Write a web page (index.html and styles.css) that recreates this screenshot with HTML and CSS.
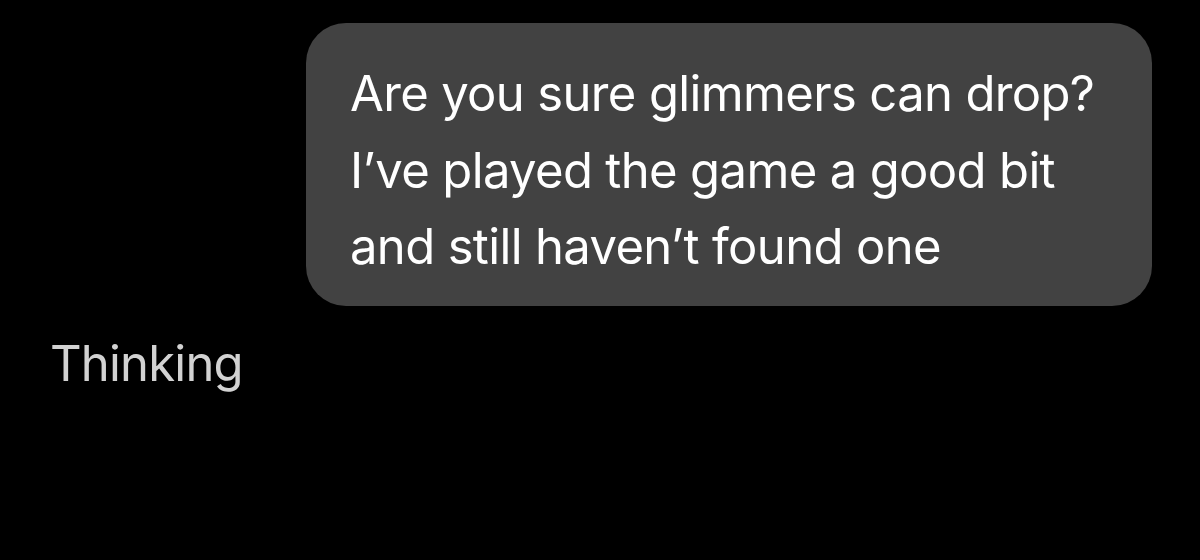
FILE: index.html
```html
<!DOCTYPE html>
<html>
<head>
<meta charset="utf-8">
<link rel="stylesheet" href="styles.css">
</head>
<body>
<main class="chat">
  <div class="row-user">
    <div class="bubble">Are you sure glimmers can drop? I’ve played the game a good bit and still haven’t found one</div>
  </div>
  <div class="thinking">Thinking</div>
</main>
</body>
</html>
```
FILE: styles.css
```css
html, body {
  margin: 0;
  padding: 0;
  background: #000;
}
.chat {
  width: 1200px;
  height: 560px;
  display: flex;
  flex-direction: column;
  font-family: Inter, "Noto Sans", sans-serif;
  overflow: hidden;
}
.row-user {
  display: flex;
  justify-content: flex-end;
  padding: 23px 48px 0 0;
}
.bubble {
  box-sizing: border-box;
  width: 846px;
  height: 283px;
  padding: 33px 40px 0 44px;
  background: #424242;
  border-radius: 40px;
  color: #fff;
  font-size: 49px;
  line-height: 76.5px;
  letter-spacing: -0.65px;
}
.thinking {
  margin: 28px 0 0 50px;
  color: #d2d2d2;
  font-size: 49px;
  line-height: 60px;
  letter-spacing: -0.8px;
}
```
